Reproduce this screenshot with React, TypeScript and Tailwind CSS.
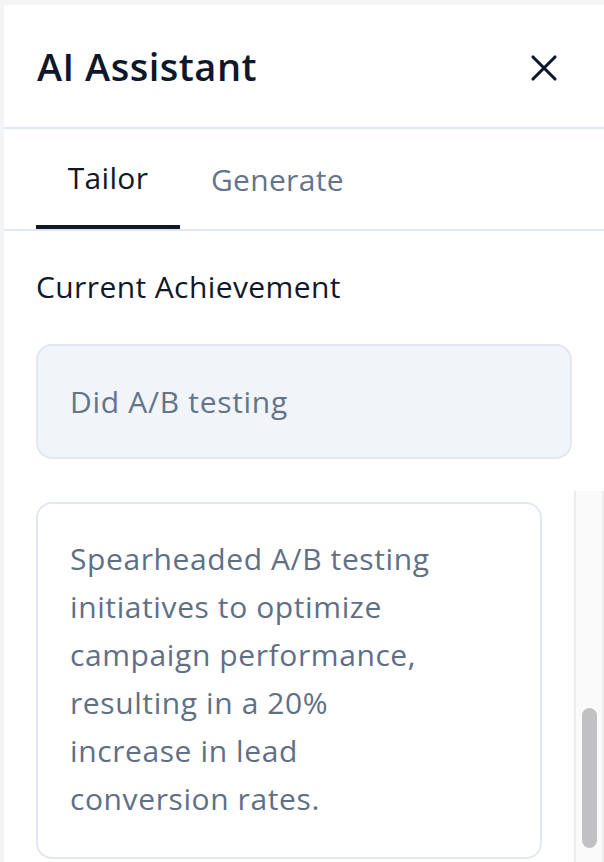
import { X } from "lucide-react";

export default function App() {
  return (
    <div className="h-[862px] w-[604px] overflow-hidden bg-[#f5f5f6] pt-[5px] font-['Open_Sans',sans-serif]">
      <div className="flex h-full flex-col border-l-[4px] border-[#f3f4f6] bg-white">
        <div className="flex h-[124px] items-center justify-between border-b-2 border-[#e2e8f0] pl-[33px] pr-[38px]">
          <h1 className="text-[38px] font-semibold tracking-[0.5px] text-[#0f172a]">AI Assistant</h1>
          <X className="mt-[4px] h-[44px] w-[44px] text-[#0f172a]" strokeWidth={1.7} />
        </div>
        <div className="flex border-b-2 border-[#e2e8f0] pl-[32px]">
          <div className="-mb-[2px] flex h-[100px] w-[144px] items-center justify-center border-b-4 border-[#0f172a] text-[30px] tracking-[0.3px] text-[#0f172a]">
            Tailor
          </div>
          <div className="flex h-[100px] items-center px-[31px] text-[30px] tracking-[0.3px] text-[#64748b]">Generate</div>
        </div>
        <div className="pl-[32px] pr-[32px] pt-[33px]">
          <p className="text-[30px] font-medium tracking-[0.4px] text-[#0f172a]">Current Achievement</p>
          <div className="mt-[35px] flex h-[115px] items-center rounded-[16px] border-2 border-[#e2e8f0] bg-[#f1f4f9] px-[32px] text-[30px] tracking-[0.7px] text-[#64748b]">
            Did A/B testing
          </div>
        </div>
        <div className="mt-[32px] flex flex-1">
          <div className="flex-1 pl-[32px] pr-[32px] pt-[11px]">
            <div className="rounded-[16px] border-2 border-[#e2e8f0] pl-[32px] pr-[92px] pt-[31px] pb-[34px] text-[30px] leading-[48px] tracking-[0.6px] text-[#5f6f86]">
              Spearheaded A/B testing initiatives to optimize campaign performance, resulting in a 20% increase in lead conversion rates.
            </div>
          </div>
          <div className="flex w-[30px] flex-col justify-end border-x-2 border-[#ececec] bg-[#fafafa] pb-[14px]">
            <div className="mx-auto h-[140px] w-[15px] rounded-full bg-[#c1c1c4]" />
          </div>
        </div>
      </div>
    </div>
  );
}
